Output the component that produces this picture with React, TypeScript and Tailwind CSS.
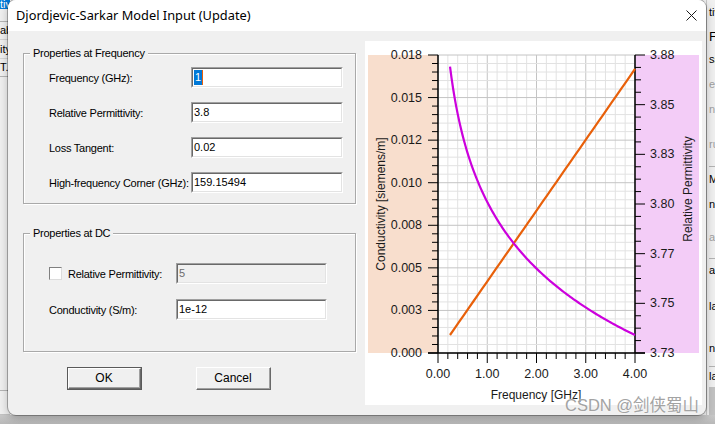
import React from "react";

const L = 438, R = 635, T = 55, B = 353;
const xs = (f: number) => L + f * 49.25;

function Chart() {
  const minorV: number[] = [];
  for (let i = 0; i <= 20; i++) minorV.push(L + (i * (R - L)) / 20);
  const minorH: number[] = [];
  for (let i = 0; i <= 35; i++) minorH.push(T + (i * (B - T)) / 35);
  const rightTicks: number[] = [];
  for (let i = 0; i <= 24; i++) rightTicks.push(T + (i * (B - T)) / 24);
  const leftLabels = ["0.018", "0.015", "0.012", "0.010", "0.008", "0.005", "0.003", "0.000"];
  const rightLabels = ["3.88", "3.85", "3.83", "3.80", "3.77", "3.75", "3.73"];
  const botLabels = ["0.00", "1.00", "2.00", "3.00", "4.00"];

  const mag: string[] = [];
  for (let i = 0; i <= 120; i++) {
    const f = 0.244 + (i * (4 - 0.244)) / 120;
    mag.push(`${xs(f).toFixed(2)},${(202 + 96 * Math.log(f)).toFixed(2)}`);
  }
  const ora: string[] = [];
  for (let i = 0; i <= 40; i++) {
    const x = 450 + (i * 185) / 40;
    ora.push(`${x.toFixed(2)},${(335 - 1.438 * (x - 450)).toFixed(2)}`);
  }
  const font = "'Liberation Sans', Arial, sans-serif";
  return (
    <svg width={337} height={364} viewBox="365 41 337 364" className="block">
      <rect x={368} y={T} width={L - 368} height={B - T} fill="#f8decd" />
      <rect x={R} y={T} width={699 - R} height={B - T} fill="#f3ccf7" />
      <rect x={L} y={T} width={R - L} height={B - T} fill="#ffffff" />
      {minorV.map((x, i) => (
        <line key={"v" + i} x1={x} x2={x} y1={T} y2={B} stroke={i % 5 === 0 ? "#c4c4c4" : "#e2e2e2"} strokeWidth={1} />
      ))}
      {minorH.map((y, i) => (
        <line key={"h" + i} x1={L} x2={R} y1={y} y2={y} stroke={i % 5 === 0 ? "#c4c4c4" : "#e2e2e2"} strokeWidth={1} />
      ))}
      {minorH.map((y, i) => (
        <line key={"lt" + i} x1={i % 5 === 0 ? 428 : 432} x2={L} y1={y} y2={y} stroke="#000" strokeWidth={1} />
      ))}
      {rightTicks.map((y, i) => (
        <line key={"rt" + i} x1={R} x2={i % 4 === 0 ? 645 : 641} y1={y} y2={y} stroke="#000" strokeWidth={1} />
      ))}
      {minorV.map((x, i) => (
        <line key={"bt" + i} x1={x} x2={x} y1={B} y2={i % 5 === 0 ? 363 : 359} stroke="#000" strokeWidth={1} />
      ))}
      <line x1={L} x2={L} y1={T} y2={B} stroke="#000" strokeWidth={1.5} />
      <line x1={R} x2={R} y1={T} y2={B} stroke="#000" strokeWidth={1.5} />
      <line x1={428} x2={645} y1={B} y2={B} stroke="#000" strokeWidth={1.5} />
      <polyline points={ora.join(" ")} fill="none" stroke="#e8600a" strokeWidth={2.2} />
      <polyline points={mag.join(" ")} fill="none" stroke="#cc00dd" strokeWidth={2.2} />
      {leftLabels.map((t, i) => (
        <text key={t} x={422} y={T + (i * (B - T)) / 7} textAnchor="end" dominantBaseline="central" fontFamily={font} fontSize={12.5} fill="#1a1a1a">{t}</text>
      ))}
      {rightLabels.map((t, i) => (
        <text key={t} x={650} y={T + (i * (B - T)) / 6} dominantBaseline="central" fontFamily={font} fontSize={12.5} fill="#1a1a1a">{t}</text>
      ))}
      {botLabels.map((t, i) => (
        <text key={t} x={L + i * 49.25} y={374} textAnchor="middle" dominantBaseline="central" fontFamily={font} fontSize={12.5} fill="#1a1a1a">{t}</text>
      ))}
      <text x={536} y={395} textAnchor="middle" dominantBaseline="central" fontFamily={font} fontSize={12} fill="#1a1a1a">Frequency [GHz]</text>
      <text x={0} y={0} transform="translate(381 204) rotate(-90)" textAnchor="middle" dominantBaseline="central" fontFamily={font} fontSize={12} fill="#1a1a1a">Conductivity [siemens/m]</text>
      <text x={0} y={0} transform="translate(688 189) rotate(-90)" textAnchor="middle" dominantBaseline="central" fontFamily={font} fontSize={12} fill="#1a1a1a">Relative Permittivity</text>
    </svg>
  );
}

function Edit({ value, w, disabled, selected }: { value: string; w: string; disabled?: boolean; selected?: boolean }) {
  return (
    <div className={`${w} h-[21px] border-t border-l border-t-[#a0a0a0] border-l-[#a0a0a0] border-b border-r border-b-white border-r-white`}>
      <div className={`h-full border-t border-l border-t-[#696969] border-l-[#696969] border-b border-r border-b-[#e3e3e3] border-r-[#e3e3e3] ${disabled ? "bg-[#f0f0f0] text-[#6d6d6d]" : "bg-white text-black"} flex items-center pl-[1px] text-[11px]`}>
        {selected ? (
          <span className="flex items-center">
            <span className="bg-[#0078d7] text-white h-[15px] px-[1px] leading-[15px]">{value}</span>
            <span className="w-[1px] h-[15px] bg-[#e8600a]" />
          </span>
        ) : (
          <span>{value}</span>
        )}
      </div>
    </div>
  );
}

function Row({ label, children, labelW }: { label: string; children: React.ReactNode; labelW: string }) {
  return (
    <div className="flex items-center h-[21px]">
      <div className={`${labelW} text-[11px] tracking-[-0.25px] text-black pt-[2px]`}>{label}</div>
      {children}
    </div>
  );
}

function Group({ title, h, children, pt }: { title: string; h: string; children: React.ReactNode; pt: string }) {
  return (
    <div className={`relative w-[333px] ${h} border border-[#a9a9a9] shadow-[inset_1px_1px_0_#ffffff,1px_1px_0_#ffffff] ${pt}`}>
      <span className="absolute left-[6px] top-[-8px] bg-[#f0f0f0] px-[3px] text-[11px] tracking-[-0.25px] leading-[14px] text-black">{title}</span>
      {children}
    </div>
  );
}

function Button({ label, def }: { label: string; def?: boolean }) {
  return (
    <div className={`w-[75px] h-[23px] ${def ? "border border-[#5a5a5a]" : ""}`}>
      <div className={`w-full h-full border-t border-l border-t-white border-l-white border-b border-r border-b-[#696969] border-r-[#696969] bg-[#f0f0f0]`}>
        <div className="w-full h-full border-b border-r border-b-[#a0a0a0] border-r-[#a0a0a0] flex items-center justify-center text-[12px] text-black">
          {label}
        </div>
      </div>
    </div>
  );
}

export default function App() {
  const rightFrag = [
    { t: "tiv", c: "text-black", h: "h-[26px]" },
    { t: "F", c: "text-black text-[13px]", h: "h-[22px]" },
    { t: "ss", c: "text-black", h: "h-[24px]" },
    { t: "ec", c: "text-[#a0a0a0]", h: "h-[25px]" },
    { t: "ne", c: "text-[#a0a0a0]", h: "h-[26px]" },
    { t: "ru", c: "text-[#a0a0a0]", h: "h-[44px]" },
    { t: "M", c: "text-black", h: "h-[26px]" },
    { t: "ne", c: "text-black", h: "h-[24px]" },
    { t: "a", c: "text-[#a0a0a0]", h: "h-[42px]" },
    { t: "ap", c: "text-black", h: "h-[24px]" },
    { t: "la", c: "text-black", h: "h-[48px]" },
    { t: "ne", c: "text-black", h: "h-[36px]" },
    { t: "la", c: "text-black", h: "h-[20px]" },
  ];
  return (
    <div className="relative w-[715px] h-[424px] overflow-hidden bg-[#f0f0f0] font-['Liberation_Sans',Arial,sans-serif]">
      {/* background application, left sliver */}
      <div className="absolute left-0 top-0 w-[10px] h-[424px] flex flex-col text-[11px] leading-[13px] overflow-hidden">
        <div className="h-[9px] bg-[#0078d7] text-white overflow-hidden leading-[9px]">tiv</div>
        <div className="h-[13px] border-b border-[#b4b4b4]" />
        <div className="h-[18px] border-b border-[#d4d4d4] flex items-center">ab</div>
        <div className="h-[19px] border-b border-[#d4d4d4] flex items-center">ity</div>
        <div className="h-[18px] border-b border-[#b4b4b4] flex items-center">T.</div>
        <div className="flex-1" />
        <div className="h-[24px] border-t border-[#b4b4b4]" />
        <div className="h-[10px] bg-[#c2c2c2]" />
      </div>
      {/* background application, right sliver */}
      <div className="absolute left-[706px] top-0 w-[9px] h-[424px] flex flex-col text-[11px] pl-[2px] overflow-hidden border-l border-[#c8c8c8]">
        {rightFrag.map((r, i) => (
          <div key={i} className={`${r.h} ${r.c} flex items-center whitespace-nowrap border-b ${i === 5 || i === 8 || i === 11 ? "border-[#b4b4b4]" : "border-transparent"}`}>
            {r.t}
          </div>
        ))}
        <div className="flex-1 bg-[#c2c2c2]" />
      </div>
      {/* bottom desktop strip */}
      <div className="absolute left-0 top-[415px] w-[715px] h-[9px] bg-gradient-to-b from-[#c8c8c8] to-[#b8b8b8]" />

      {/* dialog */}
      <div className="absolute left-[8px] top-[0px] w-[698px] h-[415px] rounded-[8px] overflow-hidden bg-[#f0f0f0] shadow-[0_0_0_1px_rgba(0,0,0,0.28),0_3px_10px_rgba(0,0,0,0.25)] flex flex-col">
        <div className="h-[31px] bg-white flex items-center justify-between pl-[8px] pr-[9px]">
          <span className="text-[12.8px] text-black font-['Noto_Sans',sans-serif]">Djordjevic-Sarkar Model Input (Update)</span>
          <svg width="11" height="11" viewBox="0 0 11 11">
            <path d="M0.5 0.5 L10.5 10.5 M10.5 0.5 L0.5 10.5" stroke="#1a1a1a" strokeWidth="1" />
          </svg>
        </div>
        <div className="flex-1 flex">
          <div className="w-[357px] pl-[15px] pt-[22px] flex flex-col">
            <Group title="Properties at Frequency" h="h-[151px]" pt="pt-[13px]">
              <div className="flex flex-col gap-[14px] pl-[25px]">
                <Row label="Frequency (GHz):" labelW="w-[142px]">
                  <Edit value="1" w="w-[152px]" selected />
                </Row>
                <Row label="Relative Permittivity:" labelW="w-[142px]">
                  <Edit value="3.8" w="w-[152px]" />
                </Row>
                <Row label="Loss Tangent:" labelW="w-[142px]">
                  <Edit value="0.02" w="w-[152px]" />
                </Row>
                <Row label="High-frequency Corner (GHz):" labelW="w-[142px]">
                  <Edit value="159.15494" w="w-[152px]" />
                </Row>
              </div>
            </Group>
            <div className="mt-[29px]">
              <Group title="Properties at DC" h="h-[119px]" pt="pt-[29px]">
                <div className="flex flex-col gap-[15px] pl-[25px]">
                  <div className="flex items-center h-[21px]">
                    <div className="w-[13px] h-[13px] bg-white border-t border-l border-t-[#808080] border-l-[#808080] border-b border-r border-b-[#dcdcdc] border-r-[#dcdcdc]" />
                    <div className="w-[114px] pl-[6px] text-[11px] tracking-[-0.25px] pt-[2px]">Relative Permittivity:</div>
                    <Edit value="5" w="w-[151px]" disabled />
                  </div>
                  <Row label="Conductivity (S/m):" labelW="w-[127px]">
                    <Edit value="1e-12" w="w-[151px]" />
                  </Row>
                </div>
              </Group>
            </div>
            <div className="mt-[15px] pl-[44px] flex gap-[54px]">
              <Button label="OK" def />
              <Button label="Cancel" />
            </div>
          </div>
          <div className="pt-[10px]">
            <div className="w-[337px] h-[364px] bg-white">
              <Chart />
            </div>
          </div>
        </div>
      </div>

      {/* watermark */}
      <div className="absolute left-[565px] top-[395px] text-[16.5px] leading-[20px] text-[#a3a3a3] whitespace-nowrap font-['Liberation_Sans','Noto_Sans_CJK_SC',sans-serif] [text-shadow:0_0_2px_rgba(255,255,255,0.9)]">
        CSDN @剑侠蜀山
      </div>
    </div>
  );
}
